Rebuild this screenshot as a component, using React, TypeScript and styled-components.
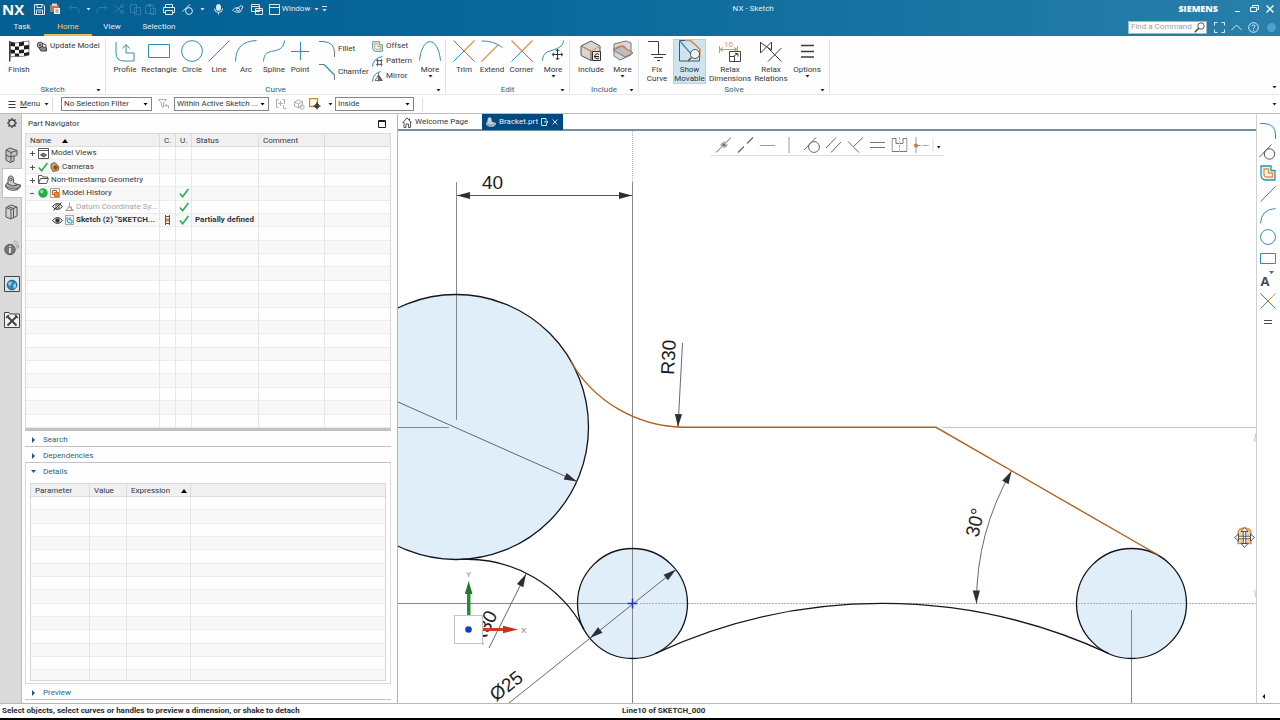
import React from "react";
import styled, { createGlobalStyle, css } from "styled-components";

/* ---------- theme values ---------- */

const TEAL = "#2a93b0";
const BLUE = "#2f8fd0";
const AMBER = "#e0944a";
const INK = "#3c3c40";
const UI = `Roboto, "Noto Sans", sans-serif`;

const GlobalStyle = createGlobalStyle`
  * { box-sizing: border-box; }
  body {
    margin: 0;
    background: #fff;
    color: #36363a;
    font: 8px/10px ${UI};
  }
  button, input, select {
    font: inherit;
    color: inherit;
    margin: 0;
    padding: 0;
    border: 0;
    background: none;
    border-radius: 0;
  }
  svg { display: block; flex: none; }
`;

/* ---------- icon helpers ---------- */

type IconProps = { w: number; h: number; stroke?: string; sw?: number; children: React.ReactNode };

const Icon = ({ w, h, stroke = INK, sw = 1, children }: IconProps) => (
  <svg width={w} height={h} viewBox={`0 0 ${w} ${h}`} fill="none" stroke={stroke} strokeWidth={sw} aria-hidden="true">
    {children}
  </svg>
);

const Down = ({ color = "#222" }: { color?: string }) => (
  <Icon w={5} h={3} stroke="none">
    <path d="M0.5 0h4L2.5 2.6z" fill={color} />
  </Icon>
);

const Check = () => (
  <Icon w={10} h={10} stroke="#22b14c" sw={1.5}>
    <path d="M0.8 5.6L3.6 8.8L9.4 1" />
  </Icon>
);

const MoveCross = () => (
  <g stroke="#333" fill="none">
    <path d="M-5 0H5M0 -5V5M-3.5 -1.8L-5.4 0L-3.5 1.8M3.5 -1.8L5.4 0L3.5 1.8M-1.8 -3.5L0 -5.4L1.8 -3.5M-1.8 3.5L0 5.4L1.8 3.5" />
  </g>
);

const OffsetIcon = ({ s = 12 }: { s?: number }) => (
  <svg width={s} height={s} viewBox="0 0 16 16" fill="none" aria-hidden="true">
    <path d="M1 1H11V5.5H15V15H6Q1 15 1 10Z" stroke={TEAL} strokeWidth="1.3" fill="#e9f6f8" />
    <path d="M4 4H8.500V8H12.500V12H7Q4 12 4 9Z" stroke={AMBER} strokeWidth="1.3" fill="#fff6e8" />
  </svg>
);

const PartIcon = ({ s = 16, light = false }: { s?: number; light?: boolean }) => (
  <svg width={s} height={s} viewBox="0 0 16 16" fill="none" stroke={light ? "#d9dde2" : "#555"} aria-hidden="true">
    <path d="M0.500 10.500Q1 7.500 5 7.500L15.500 10Q14 14.500 8.500 14Q2 13.500 0.500 10.500Z" fill={light ? "#9aa3ad" : "#a8a8a8"} />
    <path d="M0.500 10.500V12Q3 15.500 8.500 15.500Q14 15.500 15.500 11.500V10" fill="none" />
    <path d="M3 9V4.500Q3.500 0.500 6 0.800T8.500 5V7.500L12 10L8 11Z" fill={light ? "#c3c9cf" : "#cdcdcd"} />
    <circle cx="5.800" cy="4.500" r="1.300" />
  </svg>
);

/* ---------- header ---------- */

const Shell = styled.div`
  display: flex;
  flex-direction: column;
  min-height: 100vh;
`;

const Header = styled.header`
  background: linear-gradient(90deg, #045f92 0%, #07669a 35%, #13709f 62%, #2079a6 85%, #297fa9 100%);
  color: #e4eef4;
`;

const TitleBar = styled.div`
  display: flex;
  align-items: center;
  height: 18px;
  padding: 0 2px;
`;

const Brand = styled.span`
  width: 32px;
  font: bold 15px/18px "Open Sans", sans-serif;
  color: #fff;
`;

const QuickBar = styled.div`
  display: flex;
  align-items: center;
  width: 294px;
`;

const QuickButton = styled.button<{ $w?: number; $dim?: boolean }>`
  display: flex;
  align-items: center;
  justify-content: center;
  gap: 2px;
  height: 16px;
  width: ${(p) => p.$w ?? 16}px;
  opacity: ${(p) => (p.$dim ? 0.2 : 1)};
  white-space: nowrap;
`;

const AppTitle = styled.h1`
  flex: 1;
  margin: 0;
  font: 8px/16px ${UI};
  text-align: center;
`;

const Company = styled.span`
  font: 800 9px/18px "Open Sans", sans-serif;
  color: #fff;
  margin-right: 12px;
`;

const TabBar = styled.nav`
  display: flex;
  height: 18px;
`;

const RibbonTab = styled.button<{ $w: number; $on?: boolean }>`
  width: ${(p) => p.$w}px;
  height: 18px;
  padding-top: 2px;
  border-bottom: 2px solid ${(p) => (p.$on ? "#e3c04b" : "transparent")};
  color: ${(p) => (p.$on ? "#f0d46a" : "#e4eef4")};
`;

const TabTools = styled.div`
  display: flex;
  align-items: center;
  margin-left: auto;
`;

const FindBox = styled.label`
  display: flex;
  align-items: center;
  width: 79px;
  height: 13px;
  margin-right: 4px;
  padding: 0 1px 0 2px;
  background: #fff;
  border: 1px solid #9fb9c8;
`;

const FindInput = styled.input`
  flex: 1;
  min-width: 0;
  color: #444;
  outline: 0;
  &::placeholder { color: #a0a0a4; opacity: 1; }
`;

const QuickAccess = () => (
  <QuickBar>
    <QuickButton $w={12} aria-label="Save">
      <Icon w={11} h={11} stroke="#dcebf3">
        <path d="M0.5 0.5H9L10.500 2V10.500H0.500ZM3 0.500V3.500H8V0.500M2.500 10.500V6H8.500V10.500M4 8H7" />
      </Icon>
    </QuickButton>
    <QuickButton $w={18} aria-label="Paste special">
      <Icon w={12} h={12} stroke="none">
        <path d="M1 2H10V9H1Z" fill="#b9784e" />
        <path d="M3 0.500H8V3H3Z" fill="#e9d5c6" />
        <path d="M5 5H11V11H5Z" fill="#f3f3f3" />
        <path d="M6.500 7H9.500M6.500 9H9.500" stroke="#c0502a" />
      </Icon>
    </QuickButton>
    <QuickButton $w={20} $dim aria-label="Undo">
      <Icon w={12} h={10} stroke="#dcebf3"><path d="M4 0.500L1 3.500L4 6.500M1 3.500H8Q11 3.500 11 9" /></Icon>
    </QuickButton>
    <QuickButton $w={10} aria-label="Undo list"><Down color="#dcebf3" /></QuickButton>
    <QuickButton $w={16} $dim aria-label="Redo">
      <Icon w={12} h={10} stroke="#dcebf3"><path d="M8 0.500L11 3.500L8 6.500M11 3.500H4Q1 3.500 1 9" /></Icon>
    </QuickButton>
    <QuickButton $w={18} $dim aria-label="Cut">
      <Icon w={11} h={10} stroke="#dcebf3">
        <path d="M1 1L8 7M1 9L8 3" /><circle cx="9" cy="2" r="1.5" /><circle cx="9" cy="8" r="1.5" />
      </Icon>
    </QuickButton>
    <QuickButton $w={15} $dim aria-label="Copy">
      <Icon w={11} h={11} stroke="#dcebf3"><path d="M0.500 0.500H6.500V8.500H0.500ZM4.500 3.500H10.500V10.500H4.500Z" /></Icon>
    </QuickButton>
    <QuickButton $w={15} $dim aria-label="Paste">
      <Icon w={11} h={11} stroke="#dcebf3"><path d="M0.500 1.500H8.500V9.500H0.500ZM3 0.500H6V2.500H3ZM5.500 4.500H10.500V10.500H5.500Z" /></Icon>
    </QuickButton>
    <QuickButton $w={22} aria-label="Print">
      <Icon w={12} h={11} stroke="#dcebf3"><path d="M2.500 3.500V0.500H9.500V3.500M2.500 8.500H0.500V3.500H11.500V8.500H9.500M2.500 6.500H9.500V10.500H2.500Z" /></Icon>
    </QuickButton>
    <QuickButton $w={18} aria-label="Tangent">
      <Icon w={12} h={11} stroke="#dcebf3"><path d="M0.500 7.500L8 0.500" /><circle cx="7" cy="7" r="3.4" /></Icon>
    </QuickButton>
    <QuickButton $w={10} aria-label="Tangent list"><Down color="#dcebf3" /></QuickButton>
    <QuickButton $w={22} aria-label="Voice">
      <Icon w={9} h={11} stroke="#dcebf3"><rect x="2.5" y="0.5" width="4" height="6" rx="2" fill="#dcebf3" /><path d="M0.500 4.500Q0.500 8.500 4.500 8.500T8.500 4.500M4.500 8.500V10.500" /></Icon>
    </QuickButton>
    <QuickButton $w={18} aria-label="Touch mode">
      <Icon w={12} h={9} stroke="#dcebf3"><path d="M0.500 6Q2 2 6 3L9 0.500L11 2L8 7Q4 8 2 6" /><circle cx="6" cy="4.500" r="1.5" /></Icon>
    </QuickButton>
    <QuickButton $w={20} aria-label="Switch window">
      <Icon w={12} h={11} stroke="#dcebf3"><path d="M0.500 0.500H8.500V7.500H0.500ZM0.500 2.500H8.500M4.500 4.500H11.500V10.500H4.500ZM4.500 6.500H11.500" /></Icon>
    </QuickButton>
    <QuickButton $w={45} aria-haspopup="menu">
      <Icon w={11} h={11} stroke="#dcebf3"><path d="M0.500 0.500H10.500V10.500H0.500ZM0.500 3.500H10.500" /></Icon>
      Window
    </QuickButton>
    <QuickButton $w={8} aria-label="Window list"><Down color="#dcebf3" /></QuickButton>
    <QuickButton $w={8} aria-label="Customize">
      <Icon w={5} h={6} stroke="#dcebf3"><path d="M0 0.500H5" /><path d="M0.500 3H4.500L2.500 5.500Z" fill="#dcebf3" stroke="none" /></Icon>
    </QuickButton>
  </QuickBar>
);

const AppHeader = () => (
  <Header>
    <TitleBar>
      <Brand>NX</Brand>
      <QuickAccess />
      <AppTitle>NX - Sketch</AppTitle>
      <Company>SIEMENS</Company>
      <QuickButton aria-label="Minimize"><Icon w={6} h={8} stroke="#fff"><path d="M0 6.500H5" /></Icon></QuickButton>
      <QuickButton aria-label="Restore">
        <Icon w={9} h={8} stroke="#fff"><path d="M2.500 2.500V0.500H8.500V4.500H6.500M0.500 2.500H6.500V6.500H0.500Z" /></Icon>
      </QuickButton>
      <QuickButton $w={16} aria-label="Close"><Icon w={8} h={8} stroke="#fff" sw={1.4}><path d="M0.500 0.500L7.500 7.500M7.500 0.500L0.500 7.500" /></Icon></QuickButton>
    </TitleBar>
    <TabBar>
      <RibbonTab $w={44}>Task</RibbonTab>
      <RibbonTab $w={48} $on>Home</RibbonTab>
      <RibbonTab $w={40}>View</RibbonTab>
      <RibbonTab $w={54}>Selection</RibbonTab>
      <TabTools>
        <FindBox>
          <FindInput aria-label="Find a Command" placeholder="Find a Command" />
          <Icon w={11} h={11} stroke="#555"><circle cx="7" cy="4" r="3.2" /><path d="M4.600 6.400L0.800 10.200" strokeWidth="1.6" /></Icon>
        </FindBox>
        <QuickButton $w={17} aria-label="Full screen">
          <Icon w={11} h={11} stroke="#dcebf3"><path d="M0.500 3.500V0.500H3.500M7.500 0.500H10.500V3.500M10.500 7.500V10.500H7.500M3.500 10.500H0.500V7.500" /></Icon>
        </QuickButton>
        <QuickButton $w={17} aria-label="Minimize ribbon">
          <Icon w={11} h={7} stroke="#dcebf3"><path d="M0.500 6L5.500 1L10.500 6" /></Icon>
        </QuickButton>
        <QuickButton $w={17} aria-label="Help">
          <Icon w={11} h={11} stroke="#dcebf3"><circle cx="5.5" cy="5.5" r="4.8" /><path d="M4 4.300Q4 3 5.500 3T7 4.300Q7 5.200 5.500 6V7M5.500 7.800V8.800" /></Icon>
        </QuickButton>
        <QuickButton $w={18} aria-label="Status">
          <Icon w={9} h={9} stroke="none"><circle cx="4.5" cy="4.5" r="4.500" fill="#4aa3cc" /></Icon>
        </QuickButton>
      </TabTools>
    </TabBar>
  </Header>
);

/* ---------- ribbon ---------- */

const Ribbon = styled.div`
  display: flex;
  height: 59px;
  padding-top: 3px;
  border-bottom: 1px solid #e9e9e9;
  background: #fefefe;
`;

const GroupBox = styled.section<{ $w: number }>`
  display: flex;
  flex-direction: column;
  flex: none;
  width: ${(p) => p.$w}px;
  height: 54px;
  border-right: 1px solid #e2e2e2;
`;

const GroupBody = styled.div<{ $pad: number }>`
  display: flex;
  height: 45px;
  padding-left: ${(p) => p.$pad}px;
`;

const GroupFoot = styled.div`
  display: grid;
  grid-template-columns: 14px 1fr 14px;
  align-items: center;
  justify-items: center;
  height: 10px;
  margin-top: 1px;
`;

const GroupName = styled.h2`
  grid-column: 2;
  margin: 0;
  font: 8px/10px ${UI};
  color: #2b6680;
`;

const Launcher = styled.button`
  display: flex;
  align-items: center;
  justify-content: center;
  width: 10px;
  height: 10px;
`;

const BigTool = styled.button<{ $w: number; $on?: boolean }>`
  display: flex;
  flex-direction: column;
  align-items: center;
  flex: none;
  width: ${(p) => p.$w}px;
  height: 45px;
  line-height: 9px;
  border: 1px solid transparent;
  ${(p) =>
    p.$on &&
    css`
      background: #cfe4ef;
      border-color: #b5d2e0;
    `}
`;

const ToolIcon = styled.span`
  display: flex;
  align-items: center;
  justify-content: center;
  height: 22px;
  margin-bottom: 3px;
`;

const ToolText = styled.span`
  margin-bottom: 1px;
  white-space: nowrap;
`;

const Stack = styled.div<{ $w: number; $left: number; $top?: number; $bottom?: number }>`
  display: flex;
  flex-direction: column;
  justify-content: space-between;
  flex: none;
  width: ${(p) => p.$w}px;
  padding: ${(p) => p.$top ?? 0}px 0 ${(p) => p.$bottom ?? 1}px ${(p) => p.$left}px;
`;

const SmallTool = styled.button`
  display: flex;
  align-items: center;
  gap: 3px;
  height: 14px;
  white-space: nowrap;
`;

type ToolProps = { w: number; label: string; second?: string; drop?: boolean; on?: boolean; icon: React.ReactNode };

const Tool = ({ w, label, second, drop, on, icon }: ToolProps) => (
  <BigTool $w={w} $on={on}>
    <ToolIcon>{icon}</ToolIcon>
    <ToolText>
      {label}
      {second && (
        <>
          <br />
          {second}
        </>
      )}
    </ToolText>
    {drop && <Down />}
  </BigTool>
);

type GroupProps = { name: string; w: number; pad: number; children: React.ReactNode };

const Group = ({ name, w, pad, children }: GroupProps) => (
  <GroupBox $w={w}>
    <GroupBody $pad={pad}>{children}</GroupBody>
    <GroupFoot>
      <GroupName>{name}</GroupName>
      <Launcher aria-label={`${name} options`}><Down /></Launcher>
    </GroupFoot>
  </GroupBox>
);

const EdgeArrow = styled.div`
  display: flex;
  align-items: flex-end;
  margin-left: auto;
  padding: 0 1px 2px 0;
`;

const FlagIcon = () => (
  <Icon w={22} h={22} stroke="none">
    <path d="M1 1H2.500V21.500H1Z" fill="#444" />
    <path d="M2.500 2L8 3L14 2L21 1V15L14 16.500L8 16L2.500 17Z" fill="#fff" stroke="#333" strokeWidth="0.6" />
    <g fill="#1d1d1d">
      <path d="M2.500 2L7 3V6.500L2.500 6ZM11 2.500L16 1.500V5.500L11 6.500ZM7 6.500L11 6.500V10L7 10ZM16 5.500L21 5V9L16 9.500ZM2.500 9.500L7 10V13.500L2.500 13.500ZM11 10L16 9.500V13L11 13.500ZM7 13.500L11 13.500V16.500H7ZM16 13L21 12V15L16 16Z" />
    </g>
  </Icon>
);

const RibbonBar = () => (
  <Ribbon>
    <Group name="Sketch" w={106} pad={3}>
      <Tool w={32} label="Finish" icon={<FlagIcon />} />
      <Stack $w={66} $left={1}>
        <SmallTool>
          <Icon w={11} h={11} stroke="#444">
            <circle cx="4" cy="4" r="2.8" fill="#bbb" /><circle cx="4" cy="4" r="0.8" />
            <path d="M3 7L6 5.500L10.500 7V10H5Z" fill="#888" /><path d="M6 2L10 4V7" />
          </Icon>
          Update Model
        </SmallTool>
      </Stack>
    </Group>

    <Group name="Curve" w={340} pad={3}>
      <Tool w={32} label="Profile" icon={
        <Icon w={20} h={22} stroke={TEAL}><path d="M1 2V13Q1 21 9 21H19V13H11V5M7.500 8.500L11 4.500L14.500 8.500" /></Icon>} />
      <Tool w={36} label="Rectangle" icon={<Icon w={22} h={22} stroke={TEAL}><path d="M0.500 4.500H21.500V17.500H0.500Z" /></Icon>} />
      <Tool w={30} label="Circle" icon={<Icon w={22} h={22} stroke={TEAL}><circle cx="11" cy="11" r="10.4" /></Icon>} />
      <Tool w={24} label="Line" icon={<Icon w={22} h={22} stroke={TEAL}><path d="M0.500 21.500L21.500 0.500" /></Icon>} />
      <Tool w={30} label="Arc" icon={<Icon w={22} h={22} stroke={TEAL}><path d="M0.500 21.500Q0.500 1.500 21.500 0.500" /></Icon>} />
      <Tool w={26} label="Spline" icon={<Icon w={22} h={22} stroke={TEAL}><path d="M0.500 21.500C1 13 5 12 10.500 11S21 8 21.500 0.500" /></Icon>} />
      <Tool w={26} label="Point" icon={<Icon w={18} h={18} stroke={TEAL}><path d="M0 9.500H18M9.500 0V18" /></Icon>} />
      <Stack $w={58} $left={6} $top={3} $bottom={5}>
        <SmallTool>
          <Icon w={16} h={16} stroke="#777"><path d="M0 0.500H5M15.500 11V16" /><path d="M4 0.500Q15.500 1 15.500 12" stroke={TEAL} /></Icon>
          Fillet
        </SmallTool>
        <SmallTool>
          <Icon w={16} h={16} stroke="#777"><path d="M0 0.500H5M15.500 11V16" /><path d="M5 0.500L15.500 11" stroke={TEAL} strokeWidth="1.3" /></Icon>
          Chamfer
        </SmallTool>
      </Stack>
      <Stack $w={46} $left={1}>
        <SmallTool><OffsetIcon s={11} />Offset</SmallTool>
        <SmallTool>
          <Icon w={11} h={11} stroke="#555">
            <path d="M0.500 10.500Q1 2.500 10.500 0.500" stroke={TEAL} />
            <path d="M4 4.500H10.500M4 8.500H10.500M5.500 3V10.500M9.500 3V10.500" strokeWidth="0.8" /><circle cx="7.500" cy="6.500" r="2" strokeWidth="0.8" />
          </Icon>
          Pattern
        </SmallTool>
        <SmallTool>
          <Icon w={11} h={11} stroke="#555">
            <path d="M0.500 10.500Q1 2.500 8.500 0.500" stroke={TEAL} />
            <path d="M6.500 2V10.500M6.500 4L3 9.500H6.500M6.500 4L10.500 9.500H6.500" strokeWidth="0.8" /><path d="M7 5L9.500 9H7Z" fill="#999" />
          </Icon>
          Mirror
        </SmallTool>
      </Stack>
      <Tool w={26} label="More" drop icon={<Icon w={22} h={20} stroke={TEAL}><path d="M0.500 19.500C3 -5.500 19 -5.500 21.500 19.500" /></Icon>} />
    </Group>

    <Group name="Edit" w={124} pad={4}>
      <Tool w={28} label="Trim" icon={
        <Icon w={22} h={22} stroke={BLUE}><path d="M0.500 0.500L21.500 21.500M0.500 21.500L11 11" /><path d="M11 11L21.500 0.500" stroke={AMBER} strokeWidth="1.3" /></Icon>} />
      <Tool w={28} label="Extend" icon={
        <Icon w={22} h={22} stroke={TEAL}><path d="M0.500 1Q12 0.500 21.500 7.500" /><path d="M0.500 21.500L17 5" stroke={AMBER} strokeWidth="1.3" /></Icon>} />
      <Tool w={31} label="Corner" icon={
        <Icon w={22} h={22} stroke={BLUE}><path d="M0.500 21.500L11 11L21.500 21.500" /><path d="M0.500 0.500L11 11L21.500 0.500" stroke={AMBER} strokeWidth="1.3" /></Icon>} />
      <Tool w={32} label="More" drop icon={
        <Icon w={22} h={22} stroke={TEAL}><path d="M0.500 20.500C1 12 6 12 11 10S21 7 21.500 0.500" /><g transform="translate(15.500 14.500)"><MoveCross /></g></Icon>} />
    </Group>

    <Group name="Include" w={69} pad={5}>
      <Tool w={32} label="Include" icon={
        <Icon w={22} h={22} stroke="#555">
          <path d="M1 6L11 1L20 6V15L11 20.500L1 15.500Z" fill="#d6d6d6" /><path d="M1 6L11 11V20.500" /><path d="M1 6L11 11L20 6" stroke={AMBER} />
          <path d="M12.500 11.500H20.500V20.500H12.500Z" fill="#eee" stroke="#333" /><path d="M19 14.500A2.500 2.500 0 1 0 19 18M14 16.500H19" stroke="#222" />
        </Icon>} />
      <Tool w={31} label="More" drop icon={
        <Icon w={22} h={22} stroke="#777">
          <path d="M2 4L14 1L19 3V15L8 20L2 16Z" fill="#d9d9d9" /><path d="M1 10L10 6L21 13L13 17Z" fill="#bdbdbd" />
          <path d="M1 9L9 6Q13 6 14 9L20 12" stroke="#e07a4a" strokeWidth="1.3" />
        </Icon>} />
    </Group>

    <Group name="Solve" w={191} pad={2}>
      <Tool w={32} label="Fix" second="Curve" icon={
        <Icon w={18} h={22}><path d="M0 1.500H10.500V14M3 14.500H18M6 17.500H15M9 20.500H12" /></Icon>} />
      <Tool w={33} on label="Show" second="Movable" icon={
        <Icon w={22} h={22} stroke="#555">
          <path d="M0.500 21V0.500H11L20.500 9V21H0.500" /><path d="M6 0.500H12L21 9V17" stroke={AMBER} strokeWidth="1.3" /><path d="M1 1L13 15" stroke={BLUE} strokeWidth="1.3" />
          <circle cx="16" cy="14" r="4.500" fill="#f4f8fa" /><path d="M12.500 17.500L9 21" strokeWidth="1.6" />
        </Icon>} />
      <Tool w={48} label="Relax" second="Dimensions" icon={
        <Icon w={22} h={22} stroke={AMBER}>
          <path d="M0.500 6V13M18.500 6V13M1 9.500H18M4 7.500L1 9.500L4 11.500M15 7.500L18 9.500L15 11.500" />
          <text x="5" y="7" fontSize="8" fontFamily="Roboto" fill={AMBER} stroke="none">10</text>
          <path d="M10.500 11.500H21.500V21.500H10.500Z" stroke="#444" fill="#fff" /><path d="M10.500 16.500H15.500V21.500M15 16L19 13.500M16 13.500H19V16.500" stroke="#444" />
        </Icon>} />
      <Tool w={34} label="Relax" second="Relations" icon={
        <Icon w={22} h={22}><path d="M0.500 2V13L11.500 2V10L0.500 2.500M8 21.500L21.500 8M8 8L21.500 21.500" /></Icon>} />
      <Tool w={38} label="Options" drop icon={<Icon w={13} h={14} sw={1.5}><path d="M0 1.500H13M0 7.500H13M0 13H13" /></Icon>} />
    </Group>
    <EdgeArrow><Launcher aria-label="Ribbon options"><Down /></Launcher></EdgeArrow>
  </Ribbon>
);

/* ---------- selection bar ---------- */

const FilterBar = styled.div`
  display: flex;
  align-items: center;
  height: 19px;
  padding: 0 1px 0 8px;
  border-bottom: 1px solid #bdbdbd;
`;

const MenuButton = styled.button`
  display: flex;
  align-items: center;
  gap: 4px;
  width: 44px;
  height: 14px;
`;

const Rule = styled.span<{ $before?: number; $after?: number }>`
  width: 1px;
  height: 13px;
  margin: 0 ${(p) => p.$after ?? 0}px 0 ${(p) => p.$before ?? 0}px;
  background: #dedede;
`;

const SelectBox = styled.span<{ $w: number }>`
  display: grid;
  grid-template-columns: 1fr 8px;
  align-items: center;
  width: ${(p) => p.$w}px;
  height: 14px;
  border: 1px solid #858585;
  background: #fff;
`;

const NativeSelect = styled.select`
  grid-area: 1 / 1 / 2 / 3;
  appearance: none;
  width: 100%;
  height: 12px;
  padding: 0 9px 0 2px;
  line-height: 12px;
`;

const SelectArrow = styled.span`
  grid-area: 1 / 2 / 2 / 3;
  pointer-events: none;
`;

const IconButton = styled.button<{ $w: number; $dim?: boolean }>`
  display: flex;
  align-items: center;
  justify-content: center;
  width: ${(p) => p.$w}px;
  height: 14px;
  opacity: ${(p) => (p.$dim ? 0.4 : 1)};
`;

const Push = styled.span`
  margin-left: auto;
`;

const Picker = ({ w, label, value }: { w: number; label: string; value: string }) => (
  <SelectBox $w={w}>
    <NativeSelect aria-label={label} defaultValue={value}><option>{value}</option></NativeSelect>
    <SelectArrow><Down color="#000" /></SelectArrow>
  </SelectBox>
);

const SelectionBar = () => (
  <FilterBar>
    <MenuButton>
      <Icon w={8} h={8}><path d="M0.500 1.500H7.500M0.500 4.500H7.500M0.500 7.500H7.500" /></Icon>
      <span><u>M</u>enu</span>
      <Down />
    </MenuButton>
    <Rule $after={8} />
    <Picker w={91} label="Selection filter" value="No Selection Filter" />
    <IconButton $w={22} $dim aria-label="Reset filters">
      <Icon w={11} h={10}><path d="M0.500 0.500H8.500L5.500 4V8.500L3.500 7V4ZM7 6.500H10.500V9.500M8.500 5L7 6.500L8.500 8" /></Icon>
    </IconButton>
    <Picker w={95} label="Selection scope" value="Within Active Sketch ..." />
    <IconButton $w={25} $dim aria-label="Highlight">
      <Icon w={11} h={10}><path d="M2.500 0.500H0.500V8.500H2.500M6.500 0.500H8.500V5M2 4.500H7M4.500 2V7M7.500 6V9.500H10.500" /></Icon>
    </IconButton>
    <IconButton $w={11} $dim aria-label="Hidden edges">
      <Icon w={11} h={11}><path d="M0.500 3L4.500 0.800L8.500 3V7L4.500 9L0.500 7ZM0.500 3L4.500 5L8.500 3M4.500 5V9" /><circle cx="8" cy="8" r="2.2" /></Icon>
    </IconButton>
    <IconButton $w={20} aria-label="Snap region">
      <Icon w={12} h={12} sw={1}>
        <path d="M0.500 0.500H8.500V8.500H0.500Z" stroke="#c98a3a" strokeWidth="1.4" fill="#fff8ee" /><path d="M8 4V11.500M4.500 8H11.500" stroke="#222" /><circle cx="8" cy="8" r="2" stroke="#222" />
      </Icon>
    </IconButton>
    <IconButton $w={10} aria-label="Snap region list"><Down /></IconButton>
    <Picker w={79} label="Region mode" value="Inside" />
    <Rule $before={8} />
    <Push><Launcher aria-label="Bar options"><Down /></Launcher></Push>
  </FilterBar>
);

/* ---------- resource rail + navigator ---------- */

const Main = styled.main`
  display: flex;
  flex: 1;
`;

const Rail = styled.nav`
  display: flex;
  flex-direction: column;
  gap: 9px;
  flex: none;
  width: 22px;
  background: #dadada;
  border-right: 1px solid #c0c0c0;
`;

const RailSet = styled.div`
  display: flex;
  flex-direction: column;
`;

const RailButton = styled.button<{ $h?: number; $on?: boolean }>`
  display: flex;
  align-items: center;
  justify-content: center;
  width: ${(p) => (p.$on ? 20 : 21)}px;
  height: ${(p) => p.$h ?? 27}px;
  margin-left: ${(p) => (p.$on ? 2 : 1)}px;
  ${(p) =>
    p.$on &&
    css`
      background: #fff;
      border: 1px solid #c0c0c0;
      border-right: 0;
    `}
`;

const Panel = styled.aside`
  display: flex;
  flex-direction: column;
  flex: none;
  width: 375px;
  padding: 0 6px 3px 3px;
  background: #fefefe;
`;

const PanelHead = styled.div`
  display: flex;
  align-items: center;
  justify-content: space-between;
  height: 19px;
  padding: 1px 5px 0 3px;
`;

const PanelTitle = styled.h2`
  margin: 0;
  font: 8px/10px ${UI};
`;

const TreeFrame = styled.div`
  height: 298px;
  border: 1px solid #d8d8d8;
  border-bottom: 3px solid #c0c0c0;
  overflow: hidden;
`;

const Grid = styled.table<{ $h: number }>`
  width: 100%;
  height: ${(p) => p.$h}px;
  table-layout: fixed;
  border-collapse: separate;
  border-spacing: 0;
  th, td {
    height: 13px;
    padding: 0;
    border-right: 1px solid #e6e6e6;
    border-bottom: 1px solid #ececec;
    line-height: 10px;
    white-space: nowrap;
    overflow: hidden;
    text-align: left;
    vertical-align: middle;
  }
  th {
    padding: 1px 0 0 4px;
    font-weight: 400;
    background: #f0f0f0;
    border-color: #dcdcdc;
  }
  th:last-child, td:last-child { border-right: 0; }
  tbody tr:nth-child(even) { background: #f8f8f8; }
`;

const SortMark = styled.span`
  display: inline-block;
  margin-left: 11px;
  border: 3px solid transparent;
  border-top: 0;
  border-bottom: 4px solid #000;
`;

const Node = styled.div<{ $pad: number; $faint?: boolean; $bold?: boolean }>`
  display: flex;
  align-items: center;
  gap: 2px;
  height: 12px;
  padding-left: ${(p) => p.$pad}px;
  color: ${(p) => (p.$faint ? "#a4a4a8" : "inherit")};
  font-weight: ${(p) => (p.$bold ? 700 : 400)};
`;

const Center = styled.div`
  display: flex;
  justify-content: center;
`;

const Fold = styled.button<{ $open?: boolean }>`
  display: flex;
  align-items: center;
  gap: 7px;
  height: 16px;
  padding: 2px 0 0 ${(p) => (p.$open ? 1 : 6)}px;
  color: #2b6680;
  border-bottom: ${(p) => (p.$open ? "0" : "1px solid #c4c4c4")};
`;

const DetailBox = styled.div`
  display: flex;
  flex-direction: column;
  flex: 1;
  padding: 0 4px 2px;
  border: 1px solid #dcdcdc;
  border-top: 0;
`;

const DetailFrame = styled.div`
  height: 198px;
  margin-top: 4px;
  border: 1px solid #d8d8d8;
  overflow: hidden;
`;

const Expander = ({ open }: { open?: boolean }) => (
  <Icon w={7} h={8} stroke="#9a9a9a">
    <path d={open ? "M1 4.500H5" : "M1 4.500H6M3.500 2V7"} stroke="#555" />
  </Icon>
);

const FoldArrow = ({ open }: { open?: boolean }) => (
  <Icon w={5} h={6} stroke="none"><path d={open ? "M0 1H5L2.500 4Z" : "M1 0V6L4 3Z"} fill="#1d5c7c" /></Icon>
);

const EyeIcon = ({ off }: { off?: boolean }) => (
  <Icon w={11} h={9} stroke="#333">
    <path d="M0.500 4.500Q5.500 -1.500 10.500 4.500Q5.500 10.500 0.500 4.500Z" /><circle cx="5.500" cy="4.500" r="1.8" fill={off ? "#fff" : "#333"} />
    {off && <path d="M1.500 8.500L9.500 0.500" />}
  </Icon>
);

const treeRows: { cell: React.ReactNode; flag?: boolean; done?: boolean; status?: string }[] = [
  {
    cell: (
      <Node $pad={3}><Expander />
        <Icon w={11} h={11} stroke="#555"><path d="M0.500 0.500H10.500V10.500H0.500ZM0.500 2.500H10.500" /><path d="M2.500 7L5 5L8.500 7L6 9Z" fill="#777" /></Icon>
        Model Views
      </Node>
    ),
  },
  {
    cell: (
      <Node $pad={3}><Expander /><Check />
        <Icon w={10} h={10} stroke="#8a5a3a"><path d="M1 2L5 0.500L9 5L8 8.500L3 9.500L1 6Z" fill="#d9a06a" /><circle cx="5.500" cy="5.500" r="1.800" fill="#7a4a2a" /></Icon>
        Cameras
      </Node>
    ),
  },
  {
    cell: (
      <Node $pad={3}><Expander />
        <Icon w={11} h={9} stroke="#555"><path d="M0.500 8.500V0.500H4L5 2H9.500V3.500M0.500 8.500L2.500 3.500H10.500L8.500 8.500Z" /></Icon>
        Non-timestamp Geometry
      </Node>
    ),
  },
  {
    done: true,
    cell: (
      <Node $pad={3}><Expander open />
        <Icon w={10} h={10} stroke="none"><circle cx="5" cy="5" r="4.700" fill="#1fae4a" /><circle cx="3.800" cy="3.600" r="1.800" fill="#8be0a4" /></Icon>
        <Icon w={10} h={10} stroke="#8a6a5a"><path d="M0.500 0.500H9.500V9.500H0.500Z" fill="#f8efe8" strokeWidth="0.6" /><path d="M2.500 2.500H6.500V6.500H2.500Z" /><path d="M4.500 4.500H8.500V8.500H4.500Z" fill="#f08a2a" stroke="#d06a10" /></Icon>
        Model History
      </Node>
    ),
  },
  {
    done: true,
    cell: (
      <Node $pad={26} $faint><EyeIcon off />
        <Icon w={9} h={10} stroke="#c98a94"><path d="M4.500 0.500V5L0.500 8.500M4.500 5L8.500 8.500M0.500 8.500H8.500M2.500 5H6.500V8.500" /></Icon>
        Datum Coordinate Sy...
      </Node>
    ),
  },
  {
    flag: true,
    done: true,
    status: "Partially defined",
    cell: (
      <Node $pad={26} $bold><EyeIcon />
        <Icon w={9} h={10} stroke={TEAL}><path d="M0.500 0.500H8.500V9.500H0.500Z" strokeDasharray="1 1" stroke="#555" /><path d="M2 2V5Q2 8 5 8H7V5H4V3H6" /></Icon>
        Sketch (2) "SKETCH...
      </Node>
    ),
  },
];

const Navigator = () => (
  <Panel>
    <PanelHead>
      <PanelTitle>Part Navigator</PanelTitle>
      <button aria-label="Maximize panel">
        <Icon w={8} h={8} stroke="#222"><path d="M0.500 0.500H7.500V7.500H0.500ZM0.500 1.500H7.500" /></Icon>
      </button>
    </PanelHead>
    <TreeFrame>
      <Grid $h={294}>
        <colgroup>
          <col width="134" /><col width="16" /><col width="16" /><col width="67" /><col width="66" /><col />
        </colgroup>
        <thead>
          <tr><th>Name<SortMark /></th><th>C.</th><th>U.</th><th>Status</th><th>Comment</th><th /></tr>
        </thead>
        <tbody>
          {Array.from({ length: 21 }, (_, i) => {
            const row = treeRows[i];
            return (
              <tr key={i}>
                <td>{row?.cell}</td>
                <td>
                  {row?.flag && (
                    <Center>
                      <Icon w={5} h={10} stroke="#555"><path d="M0.500 0V10M4.500 0V10M0.500 1.500H4.500M0.500 8.500H4.500" /><path d="M1 5H4" stroke="#e0803a" strokeWidth="3" /></Icon>
                    </Center>
                  )}
                </td>
                <td>{row?.done && <Center><Check /></Center>}</td>
                <td>{row?.status && <Node $pad={3} $bold>{row.status}</Node>}</td>
                <td />
                <td />
              </tr>
            );
          })}
        </tbody>
      </Grid>
    </TreeFrame>
    <Fold><FoldArrow />Search</Fold>
    <Fold><FoldArrow />Dependencies</Fold>
    <DetailBox>
      <Fold $open aria-expanded="true"><FoldArrow open />Details</Fold>
      <DetailFrame>
        <Grid $h={200}>
          <colgroup><col width="59" /><col width="37" /><col width="64" /><col /></colgroup>
          <thead>
            <tr><th>Parameter</th><th>Value</th><th>Expression<SortMark /></th><th /></tr>
          </thead>
          <tbody>
            {Array.from({ length: 14 }, (_, i) => (
              <tr key={i}><td /><td /><td /><td /></tr>
            ))}
          </tbody>
        </Grid>
      </DetailFrame>
    </DetailBox>
    <Fold><FoldArrow />Preview</Fold>
  </Panel>
);

const ResourceRail = () => (
  <Rail>
    <RailSet>
      <RailButton $h={18} aria-label="Settings">
        <Icon w={10} h={10} stroke="#333" sw={1.2}><circle cx="5" cy="5" r="3.200" /><path d="M5 0V1.500M5 8.500V10M0 5H1.500M8.500 5H10M1.500 1.500L2.500 2.500M7.500 7.500L8.500 8.500M8.500 1.500L7.500 2.500M2.500 7.500L1.500 8.500" /></Icon>
      </RailButton>
    </RailSet>
    <RailSet>
      <RailButton aria-label="Assembly Navigator">
        <Icon w={13} h={16} stroke="#555">
          <path d="M1 3L5 1L12 3.500V8L9 9.500V14L5 15.500L1 13Z" fill="#c4c4c4" /><path d="M1 3L6 5.500L12 3.500M6 5.500V15M1 8L5.500 10L9 9" />
        </Icon>
      </RailButton>
      <RailButton $on $h={30} aria-label="Part Navigator"><PartIcon s={16} /></RailButton>
      <RailButton aria-label="Reuse Library">
        <Icon w={13} h={16} stroke="#555"><path d="M1 3.500L6 1L12 3V12L6 15L1 13Z" fill="#d2d2d2" /><path d="M1 3.500L6 5.500L12 3M6 5.500V15M3 2.500L8.500 4.500V13.500" /></Icon>
      </RailButton>
    </RailSet>
    <RailSet>
      <RailButton aria-label="HD3D Tools">
        <Icon w={15} h={16} stroke="#888">
          <circle cx="6" cy="9.500" r="5.200" fill="#777" stroke="#555" /><path d="M6 8V13" stroke="#fff" strokeWidth="1.500" /><path d="M6 5.700V7" stroke="#fff" strokeWidth="1.500" />
          <path d="M9 2Q13 4 13.500 9M10 0.500Q15 3 14.500 8" strokeWidth="0.7" />
        </Icon>
      </RailButton>
    </RailSet>
    <RailSet>
      <RailButton aria-label="Web Browser">
        <Icon w={16} h={16} stroke="#444">
          <path d="M0.500 0.500H15.500V15.500H0.500Z" fill="#dfe6ea" /><circle cx="8" cy="9" r="4.800" fill="#2f86b8" stroke="#1d5c84" />
          <path d="M4 7Q6 4.500 8 6L7 9L5 10ZM9 9L12 7V11L10 13Z" fill="#8fd0ea" stroke="none" />
        </Icon>
      </RailButton>
    </RailSet>
    <RailSet>
      <RailButton aria-label="Roles">
        <Icon w={16} h={16} stroke="#444">
          <path d="M0.500 15.500V0.500H5L6 2H15.500V15.500Z" fill="#f3f3f3" />
          <path d="M3 4L12.500 13.500M13 4L3.500 13.500" strokeWidth="2" /><path d="M2 6L5 3M11 3L14 6" strokeWidth="1.400" />
        </Icon>
      </RailButton>
    </RailSet>
  </Rail>
);

/* ---------- graphics area ---------- */

const Work = styled.section`
  display: flex;
  flex-direction: column;
  flex: 1;
  min-width: 0;
  border-left: 1px solid #b4b4b4;
  border-right: 1px solid #d0d0d0;
`;

const DocTabs = styled.div`
  display: flex;
  height: 17px;
  border-bottom: 2px solid #7391a5;
`;

const DocTab = styled.button<{ $w: number; $on?: boolean }>`
  display: flex;
  align-items: center;
  gap: 3px;
  width: ${(p) => p.$w}px;
  height: 16px;
  padding-left: 4px;
  color: ${(p) => (p.$on ? "#e8f1f7" : "inherit")};
  background: ${(p) => (p.$on ? "#004a80" : "transparent")};
`;

const Canvas = styled.div`
  position: relative;
  display: flex;
  flex: 1;
`;

const Drawing = styled.svg`
  flex: 1;
  min-width: 0;
  width: 100%;
  font-family: "Liberation Sans", Arial, sans-serif;
`;

const FloatBar = styled.div`
  position: absolute;
  top: 5px;
  left: 50%;
  display: flex;
  align-items: center;
  height: 20px;
  padding: 0 2px 2px;
  border-bottom: 1px solid #dedede;
  transform: translateX(-50%);
`;

const FloatButton = styled.button<{ $w?: number }>`
  display: flex;
  align-items: center;
  justify-content: center;
  width: ${(p) => p.$w ?? 22}px;
  height: 18px;
`;

const Arrow = ({ x, y, a }: { x: number; y: number; a: number }) => (
  <path d="M0 0L-13 3.600V-3.600Z" transform={`translate(${x} ${y}) rotate(${a})`} fill="#2c2f36" />
);

const SketchDrawing = () => (
  <Drawing role="img" aria-label="Bracket sketch">
    <g transform="translate(-398 -131)" fill="none">
      <g fill="#dfeef8">
        <circle cx="456" cy="427" r="132.500" />
        <circle cx="632.500" cy="603.500" r="55" />
        <circle cx="1131.500" cy="603.500" r="55" />
      </g>
      <g stroke="#85888c">
        <path d="M456.500 182V420M632.500 182V900M398 603.500H632M398 427.500H449M1131.500 610V900" />
        <path d="M632.500 131V182" stroke="#b0b0b0" strokeDasharray="1 1" />
      </g>
      <path d="M640 603.500H2400" stroke="#e89a9a" strokeDasharray="2 1" />
      <path d="M942 427.500H2400" stroke="#f9b49c" />
      <g stroke="#15151c" strokeWidth="1.300">
        <circle cx="456" cy="427" r="132.500" />
        <circle cx="632.500" cy="603.500" r="55" />
        <circle cx="1131.500" cy="603.500" r="55" />
        <path d="M461.500 559.400A132.500 132.500 0 0 1 584 629.400" />
        <path d="M655.600 653.400A538 538 0 0 1 1108.400 653.400" />
      </g>
      <path d="M570.500 361A132.500 132.500 0 0 0 683 427.300H936L1159 555.500" stroke="#b0611c" strokeWidth="1.400" />
      <g stroke="#55585e" strokeWidth="0.900">
        <path d="M457 195.500H632" stroke="#444" />
        <path d="M398 402L577 481.500M676 569.500L509 703M682.500 343L678 427M489 648L526 574" />
        <path d="M976.500 603.500A265.500 265.500 0 0 1 1011.500 471" />
      </g>
      <Arrow x={457} y={195.5} a={180} />
      <Arrow x={632} y={195.5} a={0} />
      <Arrow x={577} y={481.5} a={24} />
      <Arrow x={676} y={569.5} a={-38} />
      <Arrow x={590} y={638} a={142} />
      <Arrow x={678} y={427} a={92} />
      <Arrow x={526} y={574} a={-63} />
      <Arrow x={976.5} y={603.5} a={89} />
      <Arrow x={1011.5} y={471} a={-62} />
      <g fill="#1c1c20" fontSize="19">
        <text x="482" y="189">40</text>
        <text transform="translate(674 375) rotate(-87)">R30</text>
        <text transform="translate(482 646) rotate(-63)">R30</text>
        <text transform="translate(496 702) rotate(-38)">Ø25</text>
        <text transform="translate(978 538) rotate(-76)">30°</text>
      </g>
      <path d="M627.500 603.500H637.500M632.500 598.500V608.500" stroke="#1c2fe0" strokeWidth="1.500" />

      {/* view triad */}
      <path d="M467 616V593H470.500V616Z" fill="#2b8a3a" />
      <path d="M464.800 594L468.700 581L472.500 594Z" fill="#1f7a2e" />
      <path d="M482 628H504V631H482Z" fill="#d23a28" />
      <path d="M503 625.800L518 629.500L503 633.200Z" fill="#c93020" />
      <rect x="454.500" y="615.500" width="28" height="28" fill="#fff" stroke="#c4c4c4" />
      <circle cx="468.500" cy="629.500" r="3.300" fill="#0b3fd0" />
      <text x="466" y="577" fontSize="8" fill="#8a7a80">Y</text>
      <text x="521" y="633" fontSize="8" fill="#c2506a">X</text>

      {/* movable handle and pointer */}
      <g transform="translate(1244.500 537.500)">
        <path d="M-6.500 -4Q-6.500 -9.500 0 -9.500T6.500 -4V6H-6.500Z" fill="#f6cfa4" stroke="#e0944a" strokeWidth="1.500" />
        <path d="M-7 -1.200H7V1.200H-7ZM-1.200 -7H1.200V7H-1.200Z" fill="#fff" stroke="#444" strokeWidth="0.800" />
        <path d="M0 -10L3.500 -6H-3.500ZM0 10L3.500 6H-3.500ZM-10 0L-6 -3.500V3.500ZM10 0L6 -3.500V3.500Z" fill="#fff" stroke="#444" strokeWidth="0.900" />
      </g>
      <path d="M1256 433L1254.500 441H1256M1254.500 590L1256 597" stroke="#f0b89a" />
    </g>
  </Drawing>
);

const FloatTools = () => (
  <FloatBar role="toolbar" aria-label="Relations">
    <FloatButton aria-label="Coincident"><Icon w={16} h={16} stroke="#666"><path d="M0.500 15.500L15.500 0.500M5 8H12M8.500 4.500V11M6 6L11 10" /></Icon></FloatButton>
    <FloatButton aria-label="Collinear"><Icon w={16} h={16} stroke="#666" sw={1.2}><path d="M0.500 15.500L6.500 9.500M9.500 6.500L15.500 0.500" /></Icon></FloatButton>
    <FloatButton aria-label="Horizontal"><Icon w={16} h={16} stroke="#999"><path d="M0 8.500H16" /></Icon></FloatButton>
    <FloatButton aria-label="Vertical"><Icon w={16} h={16} stroke="#999"><path d="M7.500 0V16" /></Icon></FloatButton>
    <FloatButton aria-label="Tangent"><Icon w={17} h={16} stroke="#666"><path d="M0.500 13L12.500 0.500" /><circle cx="10.500" cy="10" r="5.400" /></Icon></FloatButton>
    <FloatButton aria-label="Parallel"><Icon w={16} h={16} stroke="#666"><path d="M0.500 11L10.500 0.500M5.500 15.500L15.500 5" /></Icon></FloatButton>
    <FloatButton aria-label="Perpendicular"><Icon w={16} h={16} stroke="#666"><path d="M15.500 0.500L6 9.500M0.500 4.500L11.500 15.500" /></Icon></FloatButton>
    <FloatButton aria-label="Equal"><Icon w={16} h={16} stroke="#777"><path d="M0.500 5.500H15.500M0.500 10.500H15.500" /></Icon></FloatButton>
    <FloatButton aria-label="Symmetric">
      <Icon w={16} h={16} stroke="#777"><path d="M0.500 1.500H4.500V6.500H11.500V1.500H15.500V14.500H0.500Z" /><path d="M8 0V16" stroke="#d9b070" strokeDasharray="3 1" /></Icon>
    </FloatButton>
    <FloatButton aria-label="Midpoint">
      <Icon w={16} h={16} stroke="#999"><path d="M2.500 0V16" /><path d="M3 8.500H16" strokeDasharray="4 1 1 1" /><circle cx="2.500" cy="8.500" r="2" fill="#d9703a" stroke="none" /></Icon>
    </FloatButton>
    <Rule $after={2} />
    <FloatButton $w={6} aria-label="More relations"><Icon w={5} h={9} stroke="none"><path d="M0.500 6H4L2.250 8.500Z" fill="#111" /></Icon></FloatButton>
  </FloatBar>
);

/* ---------- shortcut strip ---------- */

const Strip = styled.nav`
  display: flex;
  flex-direction: column;
  align-items: center;
  justify-content: space-between;
  flex: none;
  width: 23px;
  padding: 6px 2px 1px 0;
`;

const StripSet = styled.div`
  display: flex;
  flex-direction: column;
  justify-content: space-between;
  height: 213px;
`;

const StripButton = styled.button`
  display: flex;
  align-items: center;
  justify-content: center;
  width: 20px;
  height: 21px;
`;

const StripText = styled.span`
  padding-top: 3px;
  font: bold 13px/18px "Open Sans", sans-serif;
  color: #4a4a4e;
`;

const StripEnd = styled.button`
  align-self: flex-start;
  padding-left: 5px;
`;

const ShortcutStrip = () => (
  <Strip aria-label="Shortcuts">
    <StripSet>
      <StripButton aria-label="Fillet"><Icon w={16} h={16} stroke="#777"><path d="M0 0.500H5M15.500 11V16" /><path d="M4 0.500Q15.500 1 15.500 12" stroke={TEAL} /></Icon></StripButton>
      <StripButton aria-label="Tangent"><Icon w={17} h={16} stroke="#555"><path d="M0.500 13L12.500 0.500" /><circle cx="10.500" cy="10" r="5.200" /></Icon></StripButton>
      <StripButton aria-label="Offset"><OffsetIcon s={16} /></StripButton>
      <StripButton aria-label="Line"><Icon w={16} h={16} stroke={TEAL}><path d="M0.500 15.500L15.500 0.500" /></Icon></StripButton>
      <StripButton aria-label="Arc"><Icon w={16} h={16} stroke={TEAL}><path d="M0.500 15.500Q1 1.500 15.500 0.500" /></Icon></StripButton>
      <StripButton aria-label="Circle"><Icon w={16} h={16} stroke={TEAL}><circle cx="8" cy="8" r="7.400" /></Icon></StripButton>
      <StripButton aria-label="Rectangle"><Icon w={16} h={11} stroke={TEAL}><path d="M0.500 0.500H15.500V10.500H0.500Z" /></Icon></StripButton>
      <StripButton aria-label="Text">
        <StripText>A</StripText>
        <Icon w={5} h={18} stroke="none"><path d="M0 0H5L2.500 3Z" fill="#3a6a9a" /></Icon>
      </StripButton>
      <StripButton aria-label="Trim">
        <Icon w={16} h={16} stroke={TEAL}><path d="M0.500 0.500L15.500 15.500M0.500 15.500L8 8" /><path d="M8 8L15.500 0.500" stroke={AMBER} /></Icon>
      </StripButton>
      <StripButton aria-label="Equal"><Icon w={8} h={6} stroke="#4a4560"><path d="M0 1.500H8M0 4.500H8" /></Icon></StripButton>
    </StripSet>
    <StripEnd aria-label="Collapse strip"><Icon w={4} h={8} stroke="none"><path d="M3 0V5L0.500 2.500Z" fill="#111" /></Icon></StripEnd>
  </Strip>
);

/* ---------- status bar ---------- */

const StatusBar = styled.footer`
  display: flex;
  align-items: center;
  height: 17px;
  padding: 0 2px;
  border-top: 1px solid #b8b8b8;
  border-bottom: 2px solid #000;
  font-weight: 700;
  color: #2c2c30;
`;

const StatusCell = styled.span<{ $grow: number }>`
  flex: ${(p) => p.$grow} 1 0;
  white-space: nowrap;
`;

export default function App() {
  return (
    <Shell>
      <GlobalStyle />
      <AppHeader />
      <RibbonBar />
      <SelectionBar />
      <Main>
        <ResourceRail />
        <Navigator />
        <Work>
          <DocTabs>
            <DocTab $w={84}>
              <Icon w={10} h={11} stroke="#555"><path d="M0.500 6L5 0.800L9.500 6M2 5V10.500H4V7H6.500V10.500H8.500V5M7.500 1.500V3.500" /></Icon>
              Welcome Page
            </DocTab>
            <DocTab $w={81} $on>
              <PartIcon s={10} light />
              Bracket.prt
              <Icon w={7} h={8} stroke="#cfe0ec"><path d="M5 0.500H0.500V7.500H5.500V5.500M5 0.500V2.500M3 4H7M5.500 2.500L7 4L5.500 5.500" /></Icon>
              <Icon w={8} h={6} stroke="#cfe0ec"><path d="M1.500 0.500L6.500 5.500M6.500 0.500L1.500 5.500" /></Icon>
            </DocTab>
          </DocTabs>
          <Canvas>
            <SketchDrawing />
            <FloatTools />
          </Canvas>
        </Work>
        <ShortcutStrip />
      </Main>
      <StatusBar>
        <StatusCell $grow={620}>Select objects, select curves or handles to preview a dimension, or shake to detach</StatusCell>
        <StatusCell $grow={656}>Line10 of SKETCH_000</StatusCell>
      </StatusBar>
    </Shell>
  );
}
